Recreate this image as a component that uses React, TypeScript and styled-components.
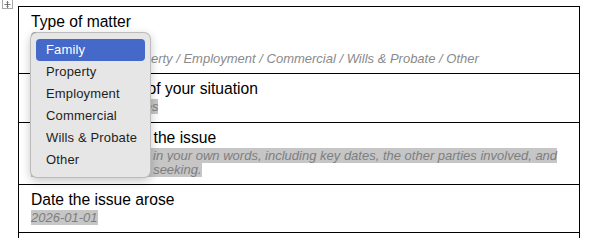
import React from 'react';
import styled, { createGlobalStyle } from 'styled-components';

const GlobalStyle = createGlobalStyle`
    html, body {
        margin: 0;
        padding: 0;
        background: #ffffff;
    }
    body {
        font-family: "Liberation Sans", Arial, Helvetica, sans-serif;
        color: #000;
    }
`;

const Page = styled.div`
    position: relative;
    padding: 6px 0 0 18px;
    width: 594px;
    height: 238px;
    box-sizing: border-box;
    overflow: hidden;
`;

const MoveHandle = styled.div`
    position: absolute;
    left: 2px;
    top: -1px;
    width: 9px;
    height: 8px;
    border: 1px solid #a8a8a8;
    background: #fff;
    display: flex;
    align-items: center;
    justify-content: center;
`;

const Table = styled.div`
    width: 562px;
    box-sizing: border-box;
    border: 1px solid #000;
    border-bottom: none;
    display: flex;
    flex-direction: column;
`;

const Row = styled.div<{ $padBottom?: number }>`
    border-bottom: 1px solid #000;
    padding: 6px 12px ${(p) => p.$padBottom ?? 7}px 12px;
    display: flex;
    flex-direction: column;
`;

const Label = styled.div`
    font-size: 15.65px;
    line-height: 18px;
    color: #000;
    white-space: nowrap;
`;

const Hint = styled.div<{ $gap?: number }>`
    margin-top: ${(p) => p.$gap ?? 2}px;
    font-size: 13px;
    line-height: 14px;
    font-style: italic;
    color: #8a8a8a;
`;

const Marked = styled.span`
    background: #c6c6c6;
    color: #7e7e7e;
`;

const SelectWrap = styled.div`
    position: relative;
    margin-top: 1px;
    height: 18px;
`;

const SelectBox = styled.div`
    width: 112px;
    height: 18px;
    box-sizing: border-box;
    border: 1px solid #7a7a7a;
    border-radius: 4px;
    background: #f4f4f4;
`;

const Menu = styled.div`
    position: absolute;
    left: -1px;
    top: 0;
    width: 121px;
    box-sizing: border-box;
    padding: 6px 5px;
    background: #e6e6e6;
    border: 0.5px solid rgba(0, 0, 0, 0.18);
    border-radius: 7px;
    box-shadow: 0 3px 10px rgba(0, 0, 0, 0.22);
    display: flex;
    flex-direction: column;
    z-index: 10;
`;

const MenuItem = styled.div<{ $active?: boolean }>`
    height: 22px;
    line-height: 22px;
    padding-left: 10px;
    border-radius: 4px;
    font-size: 13px;
    letter-spacing: 0.15px;
    white-space: nowrap;
    color: ${(p) => (p.$active ? '#ffffff' : '#1e1e1e')};
    background: ${(p) => (p.$active ? '#4469c9' : 'transparent')};
`;

const matterTypes = ['Family', 'Property', 'Employment', 'Commercial', 'Wills & Probate', 'Other'];

const App: React.FC = () => {
    return (
        <>
            <GlobalStyle />
            <Page>
                <MoveHandle>
                    <svg width="7" height="7" viewBox="0 0 7 7" fill="none" stroke="#555" strokeWidth="0.8">
                        <path d="M3.5 0.5v6M0.5 3.5h6M2.5 1.5l1-1 1 1M2.5 5.5l1 1 1-1" />
                    </svg>
                </MoveHandle>
                <Table>
                    <Row>
                        <Label>Type of matter</Label>
                        <SelectWrap>
                            <SelectBox />
                            <Menu>
                                {matterTypes.map((t, i) => (
                                    <MenuItem key={t} $active={i === 0}>{t}</MenuItem>
                                ))}
                            </Menu>
                        </SelectWrap>
                        <Hint $gap={2}>Select: Family / Property / Employment / Commercial / Wills &amp; Probate / Other</Hint>
                    </Row>
                    <Row $padBottom={8}>
                        <Label>Brief description of your situation</Label>
                        <Hint><Marked>A couple of sentences</Marked></Hint>
                    </Row>
                    <Row>
                        <Label>Brief summary of the issue</Label>
                        <Hint>
                            <Marked>
                                Describe the dispute in your own words, including key dates, the other parties involved, and the outcome you are seeking.
                            </Marked>
                        </Hint>
                    </Row>
                    <Row>
                        <Label>Date the issue arose</Label>
                        <Hint><Marked>2026-01-01</Marked></Hint>
                    </Row>
                    <Row>
                        <Label>Supporting documents</Label>
                        <Hint><Marked>List any documents you can provide</Marked></Hint>
                    </Row>
                </Table>
            </Page>
        </>
    );
};

export default App;
